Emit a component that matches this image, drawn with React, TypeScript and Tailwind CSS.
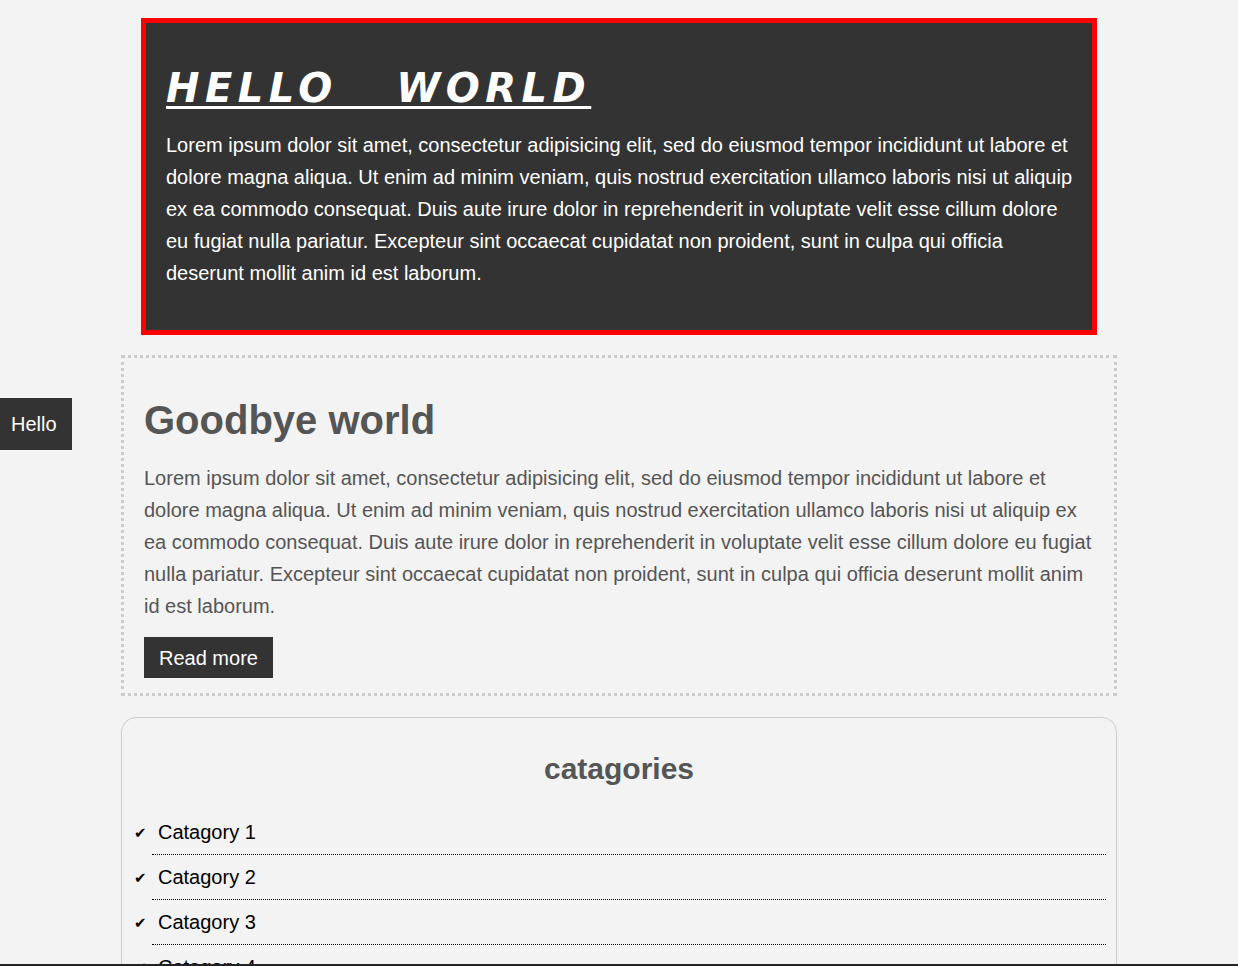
export default function App() {
  const categories = ["Catagory 1", "Catagory 2", "Catagory 3", "Catagory 4", "Catagory 5"];

  return (
    <div className="min-h-screen bg-[#f3f3f3] pt-[18px] font-['Liberation_Sans',Arial,sans-serif]">
      {/* Header */}
      <header className="mx-auto w-[956px] border-[5px] border-[#ff0000] bg-[#333333] px-5 pb-[41px] pt-[42px] text-white">
        <h1 className="mb-[17px] font-['DejaVu_Sans',Verdana,sans-serif] text-[40px] font-bold italic leading-[47px] tracking-[5.5px] underline decoration-[3px] underline-offset-[4px]">
          HELLO&nbsp;&nbsp; WORLD
        </h1>
        <p className="text-[20px] leading-[32px]">
          Lorem ipsum dolor sit amet, consectetur adipisicing elit, sed do eiusmod tempor incididunt ut labore et
          dolore magna aliqua. Ut enim ad minim veniam, quis nostrud exercitation ullamco laboris nisi ut aliquip ex
          ea commodo consequat. Duis aute irure dolor in reprehenderit in voluptate velit esse cillum dolore eu fugiat
          nulla pariatur. Excepteur sint occaecat cupidatat non proident, sunt in culpa qui officia deserunt mollit
          anim id est laborum.
        </p>
      </header>

      {/* Side tab */}
      <div className="fixed left-0 top-[398px] flex h-[52px] w-[72px] items-center bg-[#333333] pl-[11px] text-[20px] text-white">
        Hello
      </div>

      {/* Post */}
      <section className="mx-auto mt-5 w-[996px] border-[3px] border-dotted border-[#cccccc] px-5 pb-[15px]">
        <h2 className="mt-[39px] text-[40px] font-bold leading-[46px] text-[#555555]">Goodbye world</h2>
        <p className="mt-[19px] text-[20px] leading-[32px] text-[#555555]">
          Lorem ipsum dolor sit amet, consectetur adipisicing elit, sed do eiusmod tempor incididunt ut labore et
          dolore magna aliqua. Ut enim ad minim veniam, quis nostrud exercitation ullamco laboris nisi ut aliquip ex
          ea commodo consequat. Duis aute irure dolor in reprehenderit in voluptate velit esse cillum dolore eu fugiat
          nulla pariatur. Excepteur sint occaecat cupidatat non proident, sunt in culpa qui officia deserunt mollit
          anim id est laborum.
        </p>
        <button className="mt-[15px] h-[41px] bg-[#333333] px-[15px] pt-[2px] text-[20px] leading-[39px] text-white">
          Read more
        </button>
      </section>

      {/* Categories */}
      <aside className="mx-auto mt-[21px] w-[996px] rounded-[15px] border border-[#cccccc] px-[10px] pb-5 pt-[34px]">
        <h3 className="text-center text-[30px] font-bold leading-[34px] text-[#555555]">catagories</h3>
        <ul className="mt-6 pl-5">
          {categories.map((c) => (
            <li
              key={c}
              className="relative border-b border-dotted border-black py-[10px] pl-[6px] text-[20px] leading-[24px] text-black"
            >
              <span className="absolute left-[-18px] top-[11px] font-['DejaVu_Sans',sans-serif] text-[15px] leading-[24px]">
                ✔
              </span>
              {c}
            </li>
          ))}
        </ul>
      </aside>

      <div className="fixed bottom-0 left-0 h-[2px] w-full bg-[#222222]" />
    </div>
  );
}
